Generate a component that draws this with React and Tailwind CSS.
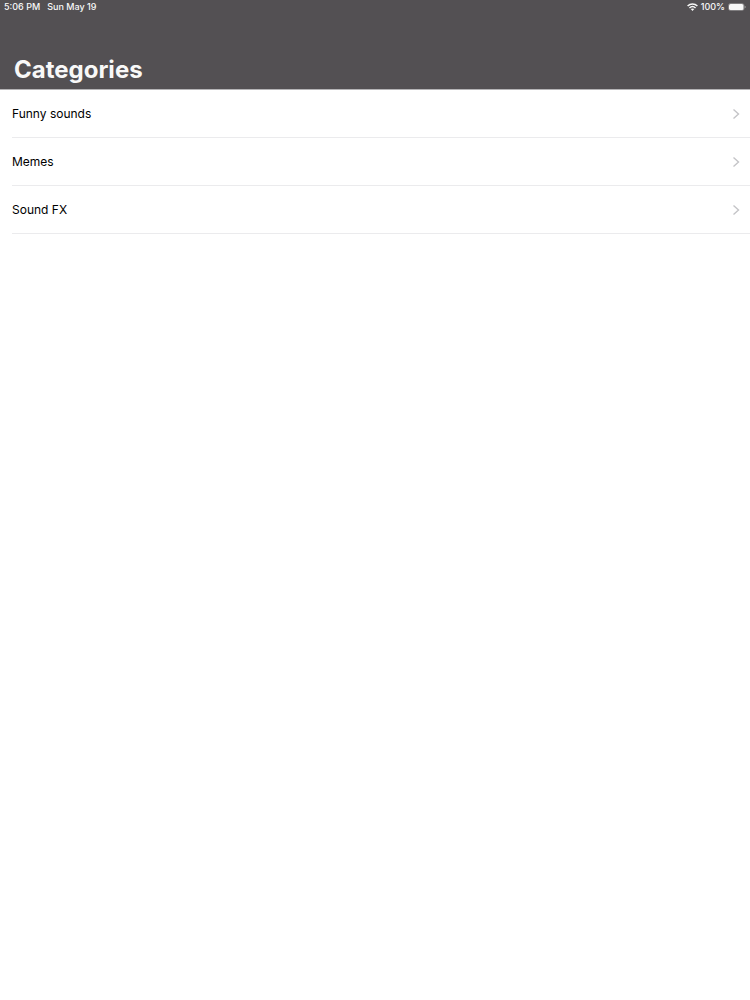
const categories = ["Funny sounds", "Memes", "Sound FX"];

function WifiIcon() {
  return (
    <svg viewBox="0 0 22 16" className="h-2 w-[11px]" aria-hidden="true">
      <g fill="none" stroke="currentColor" strokeWidth="3">
        <path d="M1.2 6C6.8 .4 15.2 .4 20.8 6" />
        <path d="M4.9 9.9C8.5 6.5 13.5 6.5 17.1 9.9" />
      </g>
      <path d="M11 15.8L7.4 12.2C9.5 10.4 12.5 10.4 14.6 12.2Z" fill="currentColor" />
    </svg>
  );
}

function BatteryIcon() {
  return (
    <svg viewBox="0 0 36 16" className="h-2 w-[18px]" aria-hidden="true">
      <rect
        x="1"
        y="1"
        width="31"
        height="14"
        rx="4"
        fill="none"
        stroke="currentColor"
        strokeOpacity="0.4"
        strokeWidth="1.4"
      />
      <rect x="2" y="2" width="29" height="12" rx="3" fill="currentColor" />
      <path d="M33.5 5.5v5c1.3-.5 2-1.4 2-2.5s-.7-2-2-2.5z" fill="currentColor" fillOpacity="0.5" />
    </svg>
  );
}

function Chevron() {
  return (
    <svg viewBox="0 0 8 12" className="h-3 w-2 text-[#c4c4c7]" aria-hidden="true">
      <path d="M1.5 1.5L6.5 6L1.5 10.5" fill="none" stroke="currentColor" strokeWidth="1.4" />
    </svg>
  );
}

function StatusBar() {
  return (
    <div className="flex h-[14px] items-center justify-between px-1 text-[9px] leading-[14px] font-medium">
      <div className="flex gap-[7px]">
        <span>5:06 PM</span>
        <span>Sun May 19</span>
      </div>
      <div className="flex items-center gap-[3px]">
        <WifiIcon />
        <span>100%</span>
        <BatteryIcon />
      </div>
    </div>
  );
}

export default function App() {
  return (
    <div className="min-h-screen bg-white font-[Inter,'Liberation_Sans',sans-serif] text-black">
      <header className="border-b border-[#b5b4b6] bg-[#535053] text-[#f8f8f8]">
        <StatusBar />
        <h1 className="px-[14px] pt-[41px] pb-1 text-2xl leading-[30px] font-bold">
          Categories
        </h1>
      </header>
      <main>
        <ul>
          {categories.map((name) => (
            <li key={name} className="pl-3">
              <button className="flex h-12 w-full cursor-pointer items-center justify-between border-b border-[#ebebed] pr-[10px] text-left text-xs">
                {name}
                <Chevron />
              </button>
            </li>
          ))}
        </ul>
      </main>
    </div>
  );
}
